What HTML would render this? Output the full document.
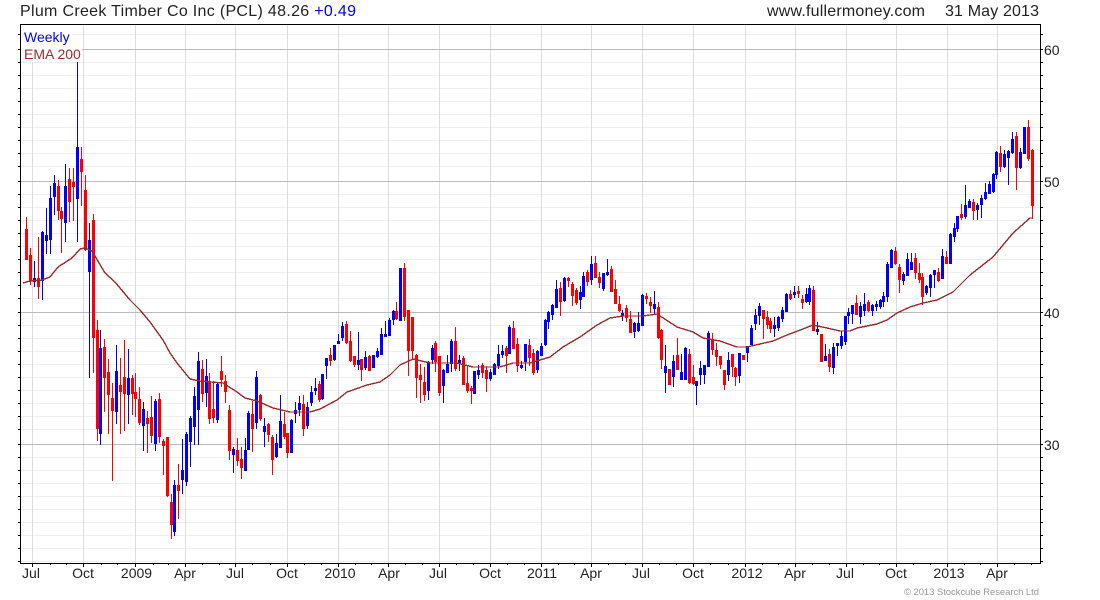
<!DOCTYPE html>
<html><head><meta charset="utf-8"><title>Plum Creek Timber Co Inc (PCL)</title>
<style>
html,body{margin:0;padding:0;background:#fff;width:1100px;height:600px;overflow:hidden}
svg{display:block}
text{font-family:"Liberation Sans",Arial,sans-serif}
</style></head><body>
<svg width="1100" height="600" viewBox="0 0 1100 600" xmlns="http://www.w3.org/2000/svg">
<g shape-rendering="crispEdges" fill="none">
<path stroke="#eee" d="M21 34.5H1040M21 62.5H1040M21 75.5H1040M21 88.5H1040M21 101.5H1040M21 114.5H1040M21 127.5H1040M21 140.5H1040M21 153.5H1040M21 166.5H1040M21 194.5H1040M21 207.5H1040M21 220.5H1040M21 233.5H1040M21 246.5H1040M21 259.5H1040M21 272.5H1040M21 285.5H1040M21 298.5H1040M21 325.5H1040M21 338.5H1040M21 351.5H1040M21 364.5H1040M21 377.5H1040M21 390.5H1040M21 403.5H1040M21 416.5H1040M21 429.5H1040M21 457.5H1040M21 470.5H1040M21 483.5H1040M21 496.5H1040M21 509.5H1040M21 522.5H1040M21 535.5H1040M21 548.5H1040M21 561.5H1040"/>
<path stroke="#ddd" d="M32.5 25V563M83.5 25V563M135.5 25V563M185.5 25V563M235.5 25V563M287.5 25V563M338.5 25V563M388.5 25V563M439.5 25V563M490.5 25V563M541.5 25V563M591.5 25V563M642.5 25V563M693.5 25V563M745.5 25V563M795.5 25V563M846.5 25V563M896.5 25V563M947.5 25V563M997.5 25V563"/>
<path stroke="#bbb" d="M21 49.5H1040M21 181.5H1040M21 312.5H1040M21 444.5H1040"/>
<!-- red wicks -->
<path stroke="#f00" d="M26.5 217V259M30.5 248V285M38.5 237V299M58.5 180V220M61.5 207V253M69.5 168V222M73.5 168V221M81.5 147V206M85.5 175V251M93.5 214V373M97.5 320V441M104.5 339V412M108.5 359V434M112.5 383V481M120.5 358V434M124.5 340V431M132.5 375V415M135.5 373V417M139.5 387V425M147.5 411V453M151.5 396V443M159.5 393V443M163.5 439V475M167.5 437V497M171.5 494V539M178.5 464V519M202.5 360V402M209.5 373V424M213.5 381V423M221.5 356V387M225.5 375V403M229.5 405V460M237.5 438V466M241.5 447V479M252.5 401V452M260.5 394V421M268.5 423V442M272.5 435V475M284.5 412V439M287.5 433V458M303.5 395V436M319.5 381V402M330.5 348V366M346.5 321V344M350.5 331V362M354.5 356V367M361.5 359V381M369.5 355V371M396.5 302V320M404.5 263V321M408.5 310V376M412.5 317V360M416.5 354V398M420.5 364V403M424.5 367V401M435.5 341V372M439.5 356V396M455.5 327V371M463.5 356V385M467.5 366V393M471.5 386V404M482.5 363V378M486.5 366V392M506.5 346V373M513.5 321V349M517.5 338V372M529.5 339V366M533.5 349V375M560.5 282V316M568.5 277V287M572.5 282V306M576.5 288V305M587.5 270V286M595.5 256V278M599.5 272V288M611.5 266V292M615.5 280V304M619.5 296V312M626.5 305V322M630.5 311V333M646.5 293V304M650.5 297V313M658.5 302V339M661.5 329V369M669.5 369V385M677.5 338V370M689.5 349V384M693.5 365V385M712.5 333V355M716.5 343V366M720.5 356V369M724.5 370V390M732.5 354V377M735.5 367V386M743.5 355V360M763.5 310V339M767.5 311V329M770.5 318V333M790.5 290V300M798.5 286V298M802.5 295V309M813.5 286V331M821.5 334V362M829.5 349V372M856.5 295V315M868.5 300V312M895.5 247V265M899.5 264V293M915.5 253V279M919.5 263V283M922.5 273V305M938.5 268V282M946.5 251V264M961.5 204V220M973.5 199V220M1000.5 146V172M1016.5 132V190M1028.5 120V161M1032.5 149V219"/>
<!-- red bodies -->
<path stroke="#f00" stroke-width="3" d="M26.5 229V260M30.5 255V281M38.5 278V287M58.5 186V211M61.5 211V219M69.5 179V202M73.5 182V187M81.5 159V172M85.5 190V250M93.5 220V338M97.5 330V429M104.5 347V378M108.5 372V395M112.5 398V411M120.5 385V392M124.5 377V394M132.5 378V394M135.5 392V399M139.5 399V423M147.5 418V424M151.5 417V436M159.5 399V437M163.5 441V446M167.5 437V496M171.5 502V525M178.5 485V491M202.5 369V394M209.5 382V419M213.5 409V418M221.5 371V380M225.5 381V392M229.5 410V451M237.5 450V461M241.5 459V468M252.5 414V429M260.5 395V419M268.5 424V435M272.5 437V460M284.5 424V437M287.5 433V453M303.5 404V429M319.5 384V400M330.5 355V361M346.5 324V343M350.5 341V361M354.5 356V365M361.5 359V370M369.5 356V371M396.5 311V319M404.5 268V317M408.5 310V351M412.5 317V351M416.5 355V378M420.5 375V380M424.5 382V395M435.5 343V362M439.5 356V393M455.5 341V369M463.5 358V385M467.5 383V391M471.5 388V391M482.5 365V373M486.5 370V379M506.5 348V356M513.5 328V349M517.5 344V366M529.5 345V358M533.5 353V373M560.5 288V302M568.5 278V281M572.5 284V296M576.5 290V303M587.5 272V282M595.5 263V278M599.5 277V283M611.5 269V292M615.5 289V304M619.5 304V311M626.5 308V318M630.5 319V333M646.5 296V299M650.5 302V306M658.5 307V338M661.5 330V360M669.5 369V385M677.5 355V370M689.5 354V383M693.5 377V384M712.5 339V350M716.5 350V357M720.5 356V365M724.5 370V385M732.5 354V367M735.5 368V377M743.5 355V360M763.5 310V319M767.5 317V325M770.5 321V329M790.5 294V299M798.5 291V294M802.5 299V303M813.5 290V331M821.5 334V362M829.5 354V367M856.5 303V315M868.5 302V311M895.5 251V264M899.5 267V280M915.5 258V273M919.5 273V280M922.5 277V297M938.5 272V281M946.5 257V264M961.5 214V218M973.5 202V211M1000.5 153V167M1016.5 136V168M1028.5 127V159M1032.5 150V206"/>
<!-- blue wicks -->
<path stroke="#00f" d="M34.5 261V287M42.5 231V300M46.5 208V254M50.5 186V254M54.5 175V215M65.5 164V242M77.5 61V242M89.5 223V378M100.5 330V445M116.5 345V424M128.5 349V424M143.5 402V451M155.5 399V451M174.5 480V536M182.5 439V494M186.5 432V486M190.5 416V467M194.5 387V445M198.5 352V445M206.5 359V407M217.5 382V423M233.5 447V473M245.5 438V471M248.5 411V450M256.5 371V429M264.5 418V447M276.5 434V458M280.5 395V448M291.5 419V453M295.5 402V423M299.5 396V416M307.5 402V429M311.5 386V406M315.5 378V395M322.5 374V400M326.5 358V379M334.5 345V361M338.5 334V344M342.5 322V341M358.5 332V370M365.5 351V370M373.5 355V368M377.5 348V358M381.5 328V355M385.5 321V337M389.5 318V336M393.5 310V325M400.5 268V321M428.5 361V400M432.5 345V364M443.5 369V403M447.5 355V373M451.5 339V372M459.5 355V371M474.5 371V394M478.5 365V379M490.5 369V381M494.5 363V375M498.5 345V369M502.5 345V358M509.5 325V354M521.5 361V369M525.5 344V371M537.5 350V373M541.5 343V356M545.5 319V346M548.5 311V329M552.5 304V320M556.5 280V308M564.5 277V302M580.5 286V309M583.5 272V297M591.5 256V285M603.5 273V291M607.5 259V276M622.5 310V321M634.5 322V338M638.5 312V332M642.5 294V326M654.5 291V315M665.5 345V393M673.5 355V387M681.5 354V380M685.5 347V380M696.5 381V405M700.5 361V385M704.5 365V384M708.5 331V367M728.5 352V381M739.5 353V383M747.5 346V362M751.5 325V345M755.5 309V330M759.5 303V325M774.5 317V337M778.5 316V331M782.5 307V322M786.5 293V312M794.5 286V298M806.5 288V303M809.5 285V305M817.5 322V335M825.5 344V361M833.5 343V374M837.5 343V356M841.5 331V349M845.5 316V345M848.5 308V324M852.5 305V324M860.5 302V324M864.5 293V316M872.5 304V316M876.5 301V311M880.5 299V309M883.5 292V307M887.5 262V302M891.5 249V268M903.5 272V285M907.5 253V276M911.5 253V270M926.5 285V295M930.5 274V297M934.5 270V288M942.5 249V279M950.5 233V264M954.5 223V242M957.5 216V232M965.5 185V219M969.5 199V208M977.5 203V220M981.5 195V218M985.5 183V200M989.5 181V194M993.5 173V193M996.5 151V179M1004.5 150V168M1008.5 150V185M1012.5 132V154M1020.5 148V169M1024.5 127V154"/>
<!-- blue bodies -->
<path stroke="#00f" stroke-width="3" d="M34.5 278V282M42.5 232V281M46.5 235V241M50.5 198V240M54.5 183V197M65.5 186V223M77.5 147V199M89.5 240V272M100.5 348V434M116.5 371V412M128.5 378V395M143.5 409V426M155.5 401V444M174.5 485V532M182.5 470V480M186.5 434V482M190.5 418V442M194.5 396V427M198.5 361V410M206.5 376V393M217.5 384V420M233.5 449V455M245.5 450V471M248.5 413V450M256.5 377V423M264.5 426V432M276.5 443V457M280.5 421V448M291.5 420V453M295.5 410V414M299.5 403V410M307.5 407V426M311.5 392V403M315.5 388V391M322.5 374V399M326.5 358V366M334.5 345V360M338.5 341V344M342.5 326V338M358.5 360V365M365.5 357V368M373.5 355V368M377.5 351V357M381.5 334V355M385.5 334V337M389.5 320V336M393.5 311V320M400.5 268V321M428.5 363V391M432.5 348V360M443.5 370V386M447.5 364V373M451.5 341V364M459.5 360V364M474.5 371V394M478.5 370V375M490.5 372V379M494.5 364V375M498.5 354V366M502.5 351V355M509.5 327V354M521.5 365V368M525.5 344V362M537.5 351V370M541.5 346V356M545.5 320V345M548.5 312V322M552.5 305V315M556.5 289V308M564.5 278V301M580.5 292V300M583.5 276V297M591.5 264V280M603.5 273V289M607.5 272V275M622.5 313V316M634.5 323V332M638.5 323V331M642.5 295V326M654.5 304V309M665.5 366V373M673.5 361V377M681.5 372V380M685.5 348V380M696.5 381V386M700.5 368V375M704.5 365V375M708.5 333V367M728.5 360V375M739.5 353V376M747.5 346V353M751.5 328V345M755.5 315V324M759.5 306V316M774.5 325V329M778.5 317V328M782.5 310V319M786.5 294V312M794.5 292V295M806.5 294V302M809.5 288V302M817.5 329V332M825.5 356V361M833.5 347V368M837.5 343V346M841.5 336V346M845.5 316V342M848.5 312V316M852.5 305V314M860.5 306V317M864.5 304V311M872.5 305V311M876.5 304V307M880.5 300V307M883.5 296V302M887.5 264V297M891.5 250V268M903.5 274V281M907.5 259V276M911.5 262V270M926.5 286V293M930.5 275V288M934.5 270V275M942.5 256V279M950.5 234V264M954.5 228V237M957.5 216V229M965.5 205V217M969.5 201V208M977.5 205V210M981.5 198V205M985.5 192V199M989.5 184V194M993.5 174V192M996.5 152V175M1004.5 154V167M1008.5 151V158M1012.5 139V153M1020.5 152V168M1024.5 127V154"/>
<!-- EMA -->
<polyline stroke="#9c2a2a" stroke-width="1.4" points="23,283 30,281 42,280 50,277 58,267 72,258 80,249 85,248 92,251 105,273 115,282 130,300 140,310 150,322 163,340 170,353 177,363 190,379 200,381 223,383 237,392 245,398 257,401 273,408 290,412 310,412 320,409 337,400 347,392 367,385 380,382 390,375 400,365 413,359 430,363 457,363 473,367 500,367 513,363 530,363 550,357 563,347 580,337 597,325 610,318 623,316 643,316 657,314 677,327 693,332 703,338 720,341 737,347 747,347 760,344 773,341 787,335 803,329 813,325 827,328 840,331 850,331 857,328 877,324 887,320 897,313 910,307 923,303 937,300 953,292 970,275 993,257 1013,233 1030,218 1032,218"/>
<!-- label backings -->
<rect x="21" y="25" width="51" height="19" fill="#fff"/>
<rect x="21" y="44" width="61" height="18" fill="#fff"/>
<!-- frame -->
<path stroke="#000" d="M20.5 24.5H1040.5V563.5H20.5Z"/>
<!-- left ticks -->
<path stroke="#000" d="M18 34.5H20M18 49.5H20M18 62.5H20M18 75.5H20M18 88.5H20M18 101.5H20M18 114.5H20M18 127.5H20M18 140.5H20M18 153.5H20M18 166.5H20M18 181.5H20M18 194.5H20M18 207.5H20M18 220.5H20M18 233.5H20M18 246.5H20M18 259.5H20M18 272.5H20M18 285.5H20M18 298.5H20M18 312.5H20M18 325.5H20M18 338.5H20M18 351.5H20M18 364.5H20M18 377.5H20M18 390.5H20M18 403.5H20M18 416.5H20M18 429.5H20M18 444.5H20M18 457.5H20M18 470.5H20M18 483.5H20M18 496.5H20M18 509.5H20M18 522.5H20M18 535.5H20M18 548.5H20M18 561.5H20"/>
<!-- right ticks -->
<path stroke="#000" d="M1041 34.5H1043M1041 49.5H1043M1041 62.5H1043M1041 75.5H1043M1041 88.5H1043M1041 101.5H1043M1041 114.5H1043M1041 127.5H1043M1041 140.5H1043M1041 153.5H1043M1041 166.5H1043M1041 181.5H1043M1041 194.5H1043M1041 207.5H1043M1041 220.5H1043M1041 233.5H1043M1041 246.5H1043M1041 259.5H1043M1041 272.5H1043M1041 285.5H1043M1041 298.5H1043M1041 312.5H1043M1041 325.5H1043M1041 338.5H1043M1041 351.5H1043M1041 364.5H1043M1041 377.5H1043M1041 390.5H1043M1041 403.5H1043M1041 416.5H1043M1041 429.5H1043M1041 444.5H1043M1041 457.5H1043M1041 470.5H1043M1041 483.5H1043M1041 496.5H1043M1041 509.5H1043M1041 522.5H1043M1041 535.5H1043M1041 548.5H1043M1041 561.5H1043"/>
<!-- bottom ticks -->
<path stroke="#000" d="M32.5 564V567M83.5 564V567M135.5 564V567M185.5 564V567M235.5 564V567M287.5 564V567M338.5 564V567M388.5 564V567M439.5 564V567M490.5 564V567M541.5 564V567M591.5 564V567M642.5 564V567M693.5 564V567M745.5 564V567M795.5 564V567M846.5 564V567M896.5 564V567M947.5 564V567M997.5 564V567M50.5 564V565M66.5 564V565M101.5 564V565M117.5 564V565M153.5 564V565M168.5 564V565M202.5 564V565M219.5 564V565M252.5 564V565M270.5 564V565M304.5 564V565M321.5 564V565M355.5 564V565M371.5 564V565M405.5 564V565M422.5 564V565M456.5 564V565M473.5 564V565M558.5 564V565M574.5 564V565M608.5 564V565M625.5 564V565M659.5 564V565M676.5 564V565M710.5 564V565M728.5 564V565M762.5 564V565M778.5 564V565M812.5 564V565M829.5 564V565M863.5 564V565M879.5 564V565M913.5 564V565M930.5 564V565M964.5 564V565M980.5 564V565M1014.5 564V565M1031.5 564V565M507.5 564V565M524.5 564V565"/>
</g>
<text x="20" y="16" font-size="16" fill="#222" textLength="336" lengthAdjust="spacing">Plum Creek Timber Co Inc (PCL) 48.26 <tspan fill="#00f">+0.49</tspan></text>
<text x="767" y="16" font-size="16" fill="#222" textLength="158" lengthAdjust="spacing">www.fullermoney.com</text>
<text x="945" y="16" font-size="16" fill="#222" textLength="94" lengthAdjust="spacing">31 May 2013</text>
<text x="24" y="42" font-size="14" fill="#00f">Weekly</text>
<text x="24" y="59" font-size="14" fill="#a52a2a">EMA 200</text>
<g font-size="14" fill="#222">
<text x="1044" y="55">60</text><text x="1044" y="187">50</text><text x="1044" y="318">40</text><text x="1044" y="450">30</text>
</g>
<g font-size="14" fill="#222" text-anchor="middle">
<text x="31" y="578">Jul</text><text x="83" y="578">Oct</text><text x="136.5" y="578">2009</text><text x="185" y="578">Apr</text><text x="235" y="578">Jul</text><text x="287" y="578">Oct</text><text x="340" y="578">2010</text><text x="389" y="578">Apr</text><text x="438" y="578">Jul</text><text x="490" y="578">Oct</text><text x="542" y="578">2011</text><text x="591" y="578">Apr</text><text x="641" y="578">Jul</text><text x="693" y="578">Oct</text><text x="747" y="578">2012</text><text x="795" y="578">Apr</text><text x="845" y="578">Jul</text><text x="896" y="578">Oct</text><text x="949" y="578">2013</text><text x="997" y="578">Apr</text>
</g>
<text x="904" y="595" font-size="9.5" fill="#999" textLength="135" lengthAdjust="spacing">© 2013 Stockcube Research Ltd</text>
</svg>
</body></html>
